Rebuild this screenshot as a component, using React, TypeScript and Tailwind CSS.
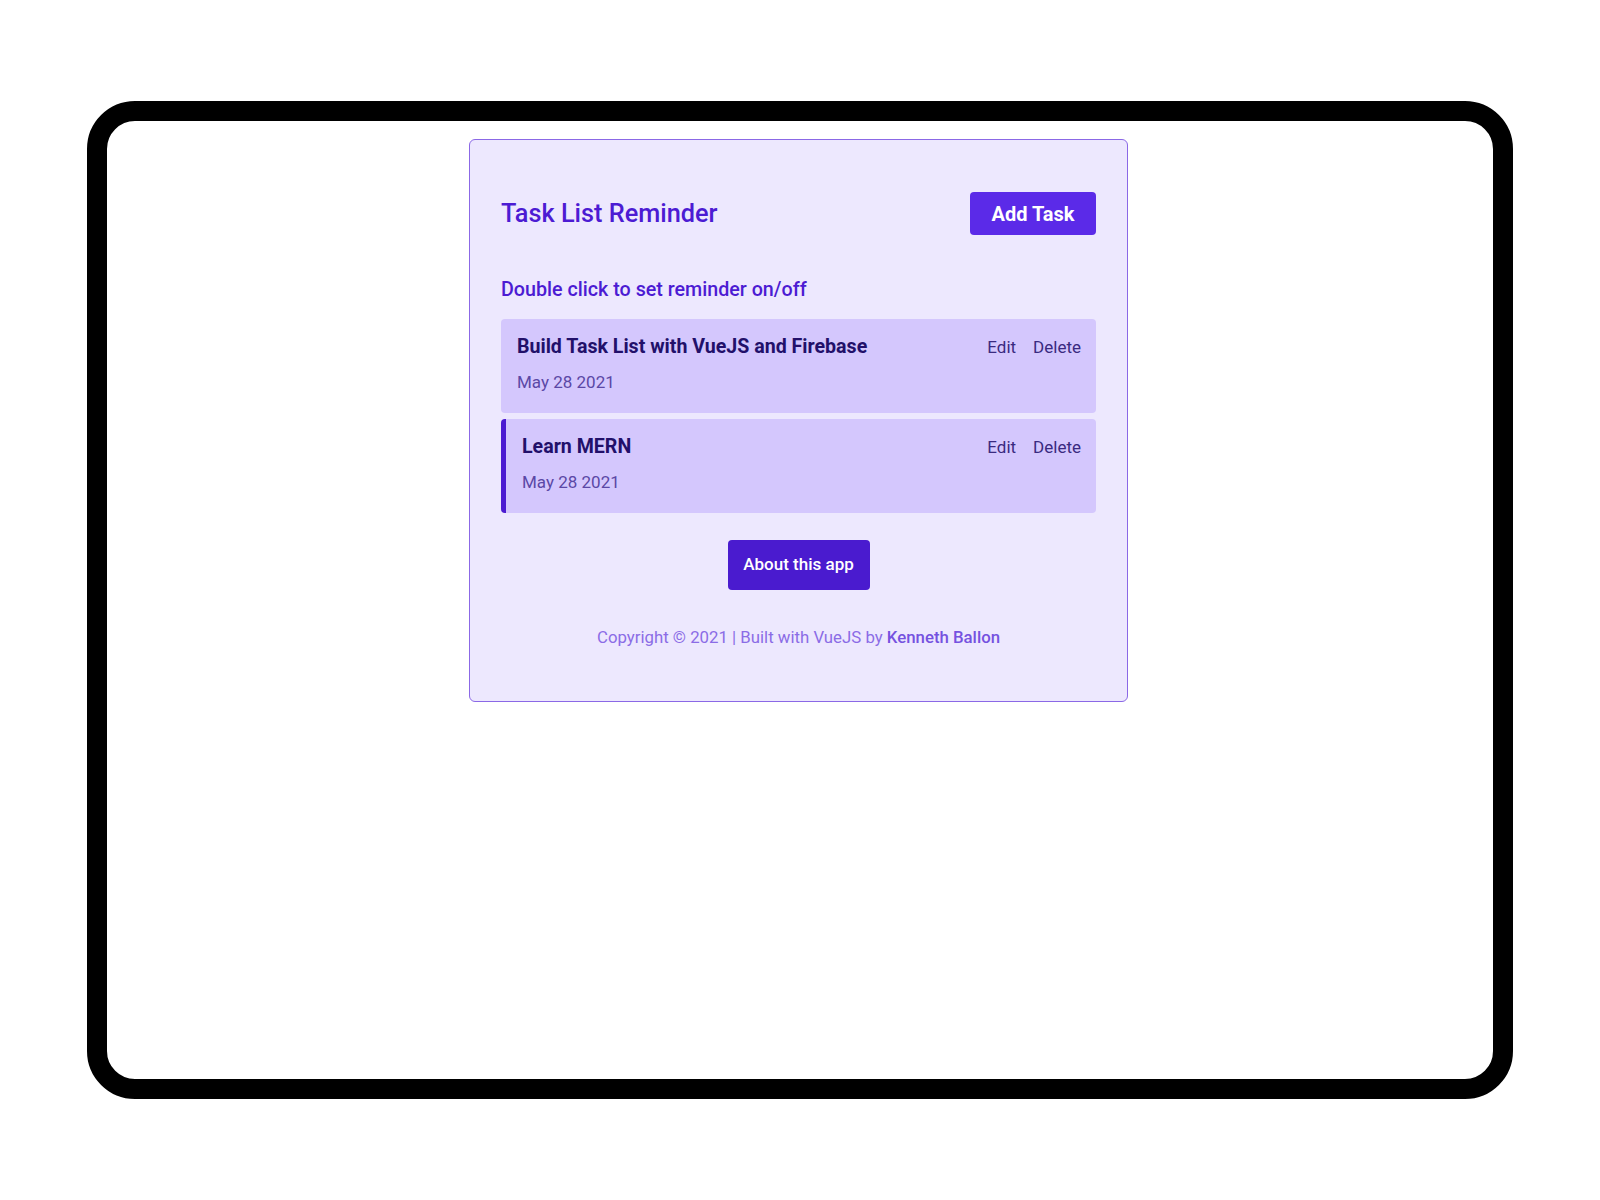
const TASKS = [
  { id: 1, text: "Build Task List with VueJS and Firebase", day: "May 28 2021", reminder: false },
  { id: 2, text: "Learn MERN", day: "May 28 2021", reminder: true },
]

function TaskItem({ text, day, reminder }: { text: string; day: string; reminder: boolean }) {
  return (
    <div
      className={
        reminder
          ? "bg-[#d4c7fd] rounded-[4px] border-l-[5px] border-[#4c1bd1] pl-[16px] pr-[15px] pt-[16px] pb-[20px]"
          : "bg-[#d4c7fd] rounded-[4px] pl-[16px] pr-[15px] pt-[16px] pb-[20px]"
      }
    >
      <div className="flex items-center justify-between">
        <h3 className="text-[19.6px] leading-[24px] font-bold text-[#22106a]">{text}</h3>
        <div className="flex items-center gap-[17px] text-[17px] leading-[24px] text-[#3a2a80]">
          <button>Edit</button>
          <button>Delete</button>
        </div>
      </div>
      <p className="mt-[12px] text-[17px] leading-[22px] text-[#5b48a6]">{day}</p>
    </div>
  )
}

export default function App() {
  return (
    <div className="min-h-[1200px] bg-white pt-[101px] px-[87px] font-['Roboto',sans-serif]">
      <div className="h-[998px] border-[20px] border-black rounded-[48px] bg-white">
        <div className="w-[659px] ml-[362px] mt-[18px] bg-[#ede8fe] border border-[#8b68e6] rounded-[6px] px-[31px] pt-[52px] pb-[53px]">
          {/* Header */}
          <div className="flex items-center justify-between">
            <h1 className="text-[25.3px] leading-[32px] font-medium text-[#4c1bd3]">Task List Reminder</h1>
            <button className="w-[126px] h-[43px] rounded-[4px] bg-[#5b2ae8] text-white text-[20px] font-bold">
              Add Task
            </button>
          </div>

          <p className="mt-[43px] text-[19.7px] leading-[24px] font-medium text-[#4c1bd3]">
            Double click to set reminder on/off
          </p>

          {/* Tasks */}
          <div className="mt-[17px] flex flex-col gap-[6px]">
            {TASKS.map((t) => (
              <TaskItem key={t.id} text={t.text} day={t.day} reminder={t.reminder} />
            ))}
          </div>

          <div className="mt-[27px] flex justify-center">
            <button className="w-[142px] h-[50px] rounded-[4px] bg-[#4a1bcf] text-white text-[17px] font-medium">
              About this app
            </button>
          </div>

          <p className="mt-[36px] text-center text-[16.8px] leading-[22px] text-[#8b6ce6]">
            Copyright © 2021 | Built with VueJS by{" "}
            <a className="font-medium text-[#7552e0]">Kenneth Ballon</a>
          </p>
        </div>
      </div>
    </div>
  )
}
